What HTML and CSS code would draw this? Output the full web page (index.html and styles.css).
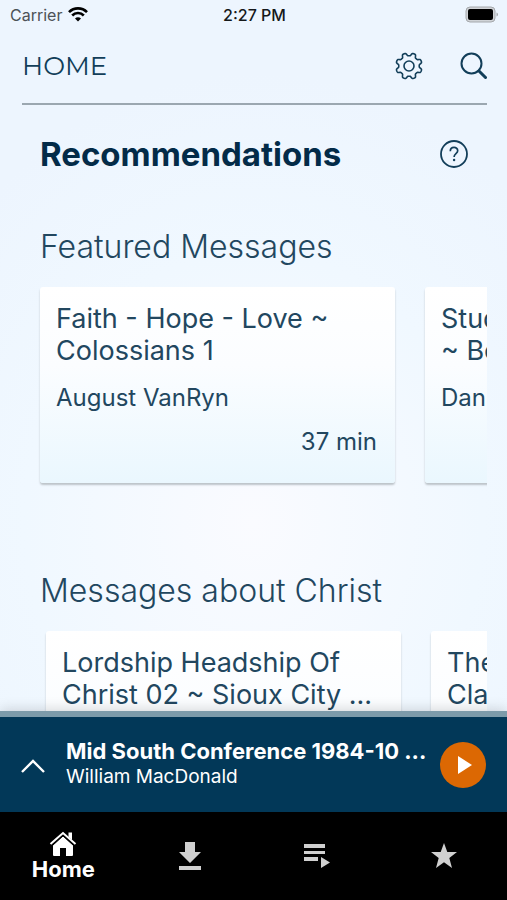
FILE: index.html
```html
<!DOCTYPE html>
<html lang="en">
<head>
    <meta charset="UTF-8">
    <meta name="viewport" content="width=device-width, initial-scale=1.0">
    <title>Home</title>
    <link rel="stylesheet" href="styles.css">
</head>
<body>
    <div class="status">
        <div class="carrier">
            <span>Carrier</span>
            <svg width="20" height="15" viewBox="0 0 20 15" fill="none" stroke="#000" stroke-width="2.6">
                <path d="M1 5.2a12.6 12.6 0 0 1 18 0"/>
                <path d="M4.2 8.5a8 8 0 0 1 11.6 0"/>
                <path d="M10 14.6l-3-3.1a4.2 4.2 0 0 1 6 0z" fill="#000" stroke="none"/>
            </svg>
        </div>
        <div class="time">2:27 PM</div>
        <div class="battery">
            <svg width="34" height="17" viewBox="0 0 34 17">
                <rect x="1" y="1" width="29" height="15" rx="4" fill="#d0d3d7" stroke="#a5a8ac"/>
                <rect x="3" y="3" width="25" height="11" rx="2" fill="#000"/>
                <path d="M31.500 6.500v4q1.500-.5 1.500-2t-1.500-2" fill="#a5a8ac"/>
            </svg>
        </div>
    </div>

    <header class="topbar">
        <h1>HOME</h1>
        <button class="icon-btn" aria-label="Settings">
            <svg width="28" height="28" viewBox="-14 -14 28 28" fill="none" stroke="#123e59" stroke-width="1.6" stroke-linejoin="round">
                <path id="gear"/>
                <circle r="5"/>
            </svg>
        </button>
        <button class="icon-btn" aria-label="Search">
            <svg width="28" height="28" viewBox="0 0 28 28" fill="none" stroke="#123e59" stroke-linecap="round">
                <circle cx="12.500" cy="11.500" r="10" stroke-width="2"/>
                <path d="M20 19l6.500 6.500" stroke-width="3"/>
            </svg>
        </button>
    </header>

    <main class="content">
        <div class="title-row">
            <h2>Recommendations</h2>
            <button class="icon-btn" aria-label="Help">
                <svg width="28" height="28" viewBox="0 0 28 28" fill="none" stroke="#123e59">
                    <circle cx="14" cy="14" r="13" stroke-width="1.8"/>
                    <path d="M10.300 11.200c0-5 7.400-4.800 7.400-.5 0 3-3.600 3-3.600 6.300" stroke-width="1.700"/>
                    <circle cx="14.100" cy="20" r="1.200" fill="#123e59" stroke="none"/>
                </svg>
            </button>
        </div>

        <section class="group">
            <h3>Featured Messages</h3>
            <div class="cards">
                <a class="card" href="#">
                    <span class="name">Faith - Hope - Love ~ Colossians 1</span>
                    <span class="speaker">August VanRyn</span>
                    <span class="length">37 min</span>
                </a>
                <a class="card" href="#">
                    <span class="name">Stud<br>~ Be</span>
                    <span class="speaker">Dan</span>
                </a>
            </div>
        </section>

        <section class="group">
            <h3>Messages about Christ</h3>
            <div class="cards inset">
                <a class="card" href="#">
                    <span class="name">Lordship Headship Of Christ 02 ~ Sioux City ...</span>
                </a>
                <a class="card" href="#">
                    <span class="name">The<br>Cla</span>
                </a>
            </div>
        </section>
    </main>

    <div class="player">
        <button class="icon-btn" aria-label="Expand player">
            <svg width="26" height="16" viewBox="0 0 26 16" fill="none" stroke="#fff" stroke-width="2.4">
                <path d="M2 15L13 4l11 11"/>
            </svg>
        </button>
        <div class="playing">
            <div class="track">Mid South Conference 1984-10 ...</div>
            <div class="artist">William MacDonald</div>
        </div>
        <button class="play" aria-label="Play">
            <svg width="16" height="20" viewBox="0 0 16 20"><path d="M1 1v18l14-9z" fill="#fff"/></svg>
        </button>
    </div>

    <nav class="tabs">
        <a class="tab active" href="#">
            <svg width="28" height="26" viewBox="0 0 28 26">
                <path d="M14 5l10 9.500V24q0 1-1 1h-6v-8h-6v8H5q-1 0-1-1v-9.500z" fill="#fff"/>
                <path d="M1.500 13L14 2l12.500 11" fill="none" stroke="#fff" stroke-width="2"/>
                <path d="M3.500 14.300L14 5l10.500 9.300" fill="none" stroke="#000"/>
                <path d="M19.500 1.500H23V9l-3.500-3z" fill="#fff"/>
            </svg>
            <span>Home</span>
        </a>
        <a class="tab" href="#" aria-label="Downloads">
            <svg width="24" height="28" viewBox="0 0 24 28" fill="#d0d0d0">
                <path d="M7 0h10v10h6L12 21 1 10h6zM1 24h22v4H1z"/>
            </svg>
        </a>
        <a class="tab" href="#" aria-label="Playlists">
            <svg width="28" height="26" viewBox="0 0 28 26" fill="#d0d0d0">
                <path d="M1 1h21v4H1zM1 8h21v3H1zM1 14h14v4H1zM18 14v11l9-5.500z"/>
            </svg>
        </a>
        <a class="tab" href="#" aria-label="Favorites">
            <svg width="26" height="26" viewBox="0 0 26 26" fill="#d0d0d0">
                <path d="M13 0l3.300 9H26l-7.700 6 2.700 10-8-5.800L5 25l2.700-10L0 9h9.700z"/>
            </svg>
        </a>
    </nav>

    <script>
        // gear outline with 8 rounded teeth
        let points = [];
        for (let i = 0; i < 120; i++) {
            let a = i / 120 * Math.PI * 2;
            let r = 11.7 + 1.5 * Math.tanh(2.2 * Math.cos(8 * a - Math.PI));
            points.push((r * Math.cos(a)).toFixed(2) + " " + (r * Math.sin(a)).toFixed(2));
        }
        document.getElementById("gear").setAttribute("d", "M" + points.join("L") + "Z");
    </script>
</body>
</html>
```

FILE: styles.css
```css
*{
    box-sizing: border-box;
}
body{
    margin: 0;
    height: 100vh;
    display: flex;
    flex-direction: column;
    overflow: hidden;
    font-family: Inter, "Liberation Sans", sans-serif;
    color: #22475f;
    background: radial-gradient(ellipse 75% 50% at 50% 58%, #fafbff, #f0f8ff 60%, #edf5fe);
}
h1, h2, h3{
    margin: 0;
}
a{
    color: inherit;
    text-decoration: none;
}
svg{
    display: block;
}
button{
    border: 0;
    padding: 0;
    background: none;
}
.status{
    display: grid;
    grid-template-columns: 1fr auto 1fr;
    align-items: center;
    height: 29px;
    padding: 0 8px 0 10px;
    font-size: 16px;
    flex-shrink: 0;
}
.carrier{
    display: flex;
    gap: 6px;
    align-items: center;
    color: #4c5257;
}
.time{
    font-weight: 500;
    color: #15181a;
}
.battery{
    justify-self: end;
}
.topbar{
    display: flex;
    align-items: center;
    gap: 36px;
    height: 76px;
    margin: 0 20px 0 22px;
    border-bottom: 2px solid #9ba7b0;
    flex-shrink: 0;
}
.topbar h1{
    flex: 1;
    font-family: Montserrat, Inter, sans-serif;
    font-size: 26px;
    font-weight: 400;
    color: #123e59;
}
.content{
    flex: 1;
    min-height: 0;
    overflow: hidden;
    margin-right: 20px;
}
.title-row{
    display: flex;
    align-items: center;
    justify-content: space-between;
    height: 98px;
    padding: 0 19px 0 40px;
}
.title-row h2{
    font-size: 33px;
    font-weight: 700;
    color: #032b48;
}
.group{
    padding-top: 24px;
}
.group h3{
    padding-left: 40px;
    font-size: 32px;
    line-height: 40px;
    font-weight: 300;
}
.cards{
    display: flex;
    gap: 30px;
    overflow: hidden;
    padding: 20px 0 64px 40px;
}
.inset{
    padding-left: 46px;
}
.card{
    flex: 0 0 355px;
    height: 196px;
    display: flex;
    flex-direction: column;
    padding: 16px 18px 16px 16px;
    border-radius: 3px;
    background: linear-gradient(#fff, #fbfdff 40%, #eaf7fe);
    box-shadow: 0 2px 2px #bcc3c9;
}
.name{
    font-size: 27px;
    line-height: 32px;
}
.speaker{
    margin-top: 16px;
    font-size: 24px;
    line-height: 30px;
}
.length{
    margin-top: 14px;
    align-self: flex-end;
    font-size: 24px;
    line-height: 30px;
}
.player{
    display: flex;
    align-items: center;
    gap: 20px;
    height: 101px;
    padding: 0 21px 0 20px;
    border-top: 6px solid #7d9baa;
    box-shadow: 0 -2px 12px rgba(0, 0, 0, 0.15);
    background: #023858;
    color: #fff;
    flex-shrink: 0;
}
.playing{
    flex: 1;
    min-width: 0;
    white-space: nowrap;
}
.track{
    font-size: 22px;
    line-height: 24px;
    font-weight: 700;
}
.artist{
    font-size: 19px;
    line-height: 28px;
}
.play{
    display: flex;
    align-items: center;
    justify-content: center;
    width: 46px;
    height: 46px;
    padding-left: 4px;
    border-radius: 50%;
    background: #dc6803;
    flex-shrink: 0;
}
.tabs{
    display: grid;
    grid-template-columns: repeat(4, 1fr);
    height: 88px;
    background: #000;
    color: #fff;
    flex-shrink: 0;
}
.tab{
    display: flex;
    flex-direction: column;
    align-items: center;
    justify-content: center;
    font-size: 22px;
    line-height: 24px;
    font-weight: 700;
}
```
